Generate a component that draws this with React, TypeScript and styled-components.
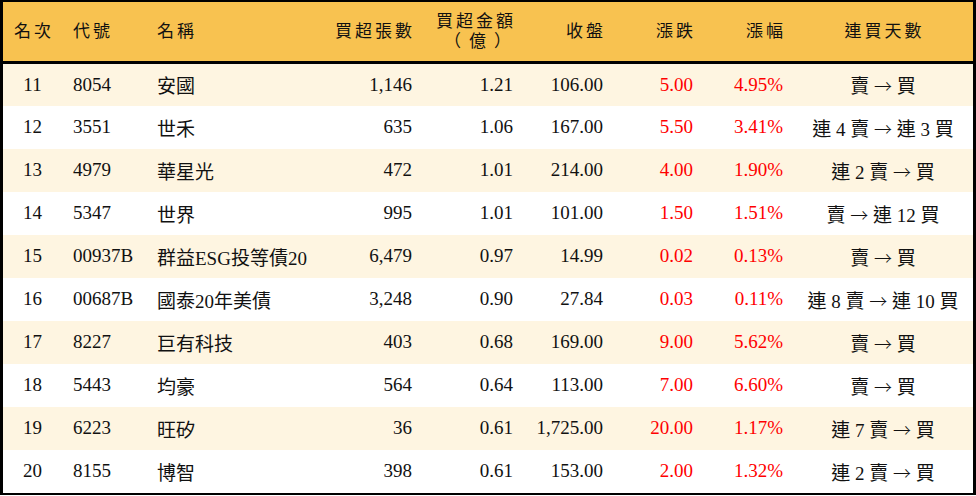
import styled, { createGlobalStyle } from "styled-components";

type Align = "left" | "right" | "center";

interface Irow {
  rank: number;
  code: string;
  name: string;
  lots: string;
  amount: string;
  close: string;
  change: string;
  pct: string;
  sell: string;
  buy: string;
}

const rows: Irow[] = [
  { rank: 11, code: "8054", name: "安國", lots: "1,146", amount: "1.21", close: "106.00", change: "5.00", pct: "4.95%", sell: "賣", buy: "買" },
  { rank: 12, code: "3551", name: "世禾", lots: "635", amount: "1.06", close: "167.00", change: "5.50", pct: "3.41%", sell: "連 4 賣", buy: "連 3 買" },
  { rank: 13, code: "4979", name: "華星光", lots: "472", amount: "1.01", close: "214.00", change: "4.00", pct: "1.90%", sell: "連 2 賣", buy: "買" },
  { rank: 14, code: "5347", name: "世界", lots: "995", amount: "1.01", close: "101.00", change: "1.50", pct: "1.51%", sell: "賣", buy: "連 12 買" },
  { rank: 15, code: "00937B", name: "群益ESG投等債20", lots: "6,479", amount: "0.97", close: "14.99", change: "0.02", pct: "0.13%", sell: "賣", buy: "買" },
  { rank: 16, code: "00687B", name: "國泰20年美債", lots: "3,248", amount: "0.90", close: "27.84", change: "0.03", pct: "0.11%", sell: "連 8 賣", buy: "連 10 買" },
  { rank: 17, code: "8227", name: "巨有科技", lots: "403", amount: "0.68", close: "169.00", change: "9.00", pct: "5.62%", sell: "賣", buy: "買" },
  { rank: 18, code: "5443", name: "均豪", lots: "564", amount: "0.64", close: "113.00", change: "7.00", pct: "6.60%", sell: "賣", buy: "買" },
  { rank: 19, code: "6223", name: "旺矽", lots: "36", amount: "0.61", close: "1,725.00", change: "20.00", pct: "1.17%", sell: "連 7 賣", buy: "買" },
  { rank: 20, code: "8155", name: "博智", lots: "398", amount: "0.61", close: "153.00", change: "2.00", pct: "1.32%", sell: "連 2 賣", buy: "買" },
];

const columns: { width: number; align: Align }[] = [
  { width: 59, align: "center" },
  { width: 83, align: "left" },
  { width: 175, align: "left" },
  { width: 102, align: "right" },
  { width: 101, align: "right" },
  { width: 90, align: "right" },
  { width: 90, align: "right" },
  { width: 90, align: "right" },
  { width: 180, align: "center" },
];

const GlobalStyle = createGlobalStyle`
  body {
    margin: 0;
    background: #ffffff;
  }
`;

function App() {
  return (
    <>
      <GlobalStyle />
      <Frame>
        <Table>
          <colgroup>
            {columns.map((c, i) => (
              <col key={i} style={{ width: c.width }} />
            ))}
          </colgroup>
          <thead>
            <tr>
              <HeadCell $align="center">名次</HeadCell>
              <HeadCell $align="left">代號</HeadCell>
              <HeadCell $align="left">名稱</HeadCell>
              <HeadCell $align="right">買超張數</HeadCell>
              <HeadCell $align="right">
                買超金額
                <SubLine>（億）</SubLine>
              </HeadCell>
              <HeadCell $align="right">收盤</HeadCell>
              <HeadCell $align="right">漲跌</HeadCell>
              <HeadCell $align="right">漲幅</HeadCell>
              <HeadCell $align="center">連買天數</HeadCell>
            </tr>
          </thead>
          <tbody>
            {rows.map((r, i) => (
              <Row key={r.rank} $odd={i % 2 === 0}>
                <Cell $align="center">{r.rank}</Cell>
                <Cell $align="left">{r.code}</Cell>
                <Cell $align="left">{r.name}</Cell>
                <Cell $align="right">{r.lots}</Cell>
                <Cell $align="right">{r.amount}</Cell>
                <Cell $align="right">{r.close}</Cell>
                <Cell $align="right" $red>
                  {r.change}
                </Cell>
                <Cell $align="right" $red>
                  {r.pct}
                </Cell>
                <Cell $align="center">
                  {r.sell} <Arrow>→</Arrow> {r.buy}
                </Cell>
              </Row>
            ))}
          </tbody>
        </Table>
      </Frame>
    </>
  );
}

export default App;

const Frame = styled.div`
  width: 976px;
  box-sizing: border-box;
  border: 3px solid #000000;
  border-top-width: 2px;
  border-bottom-width: 2px;
  font-family: "Liberation Serif", "Noto Sans CJK TC", serif;
  color: #111111;
`;

const Table = styled.table`
  width: 100%;
  table-layout: fixed;
  border-collapse: collapse;
  border-spacing: 0;
`;

const HeadCell = styled.th<{ $align: Align }>`
  height: 59px;
  padding: 0 ${({ $align }) => ($align === "right" ? "7px" : "0")} 0
    ${({ $align }) => ($align === "left" ? "11px" : "0")};
  background: #f8c250;
  border-bottom: 3px solid #000000;
  text-align: ${({ $align }) => $align};
  font-size: 17px;
  font-weight: normal;
  letter-spacing: 3px;
  line-height: 20px;
  vertical-align: middle;

  &:nth-child(3) {
    padding-left: 12px;
  }
  &:first-child,
  &:last-child {
    text-indent: 3px;
  }
`;

const SubLine = styled.span`
  display: block;
  letter-spacing: 8px;
  margin-right: -3px;
`;

const Row = styled.tr<{ $odd: boolean }>`
  height: 43px;
  background: ${({ $odd }) => ($odd ? "#fef5e1" : "#ffffff")};
`;

const Cell = styled.td<{ $align: Align; $red?: boolean }>`
  padding: 0 ${({ $align }) => ($align === "right" ? "10px" : "0")} 0
    ${({ $align }) => ($align === "left" ? "11px" : "0")};
  text-align: ${({ $align }) => $align};
  font-size: 19px;
  white-space: nowrap;
  vertical-align: middle;
  color: ${({ $red }) => ($red ? "#ff0000" : "#111111")};

  &:nth-child(3) {
    padding-left: 12px;
  }
`;

const Arrow = styled.span`
  font-family: "Noto Sans CJK TC", sans-serif;
  font-size: 18px;
  font-weight: 300;
`;
